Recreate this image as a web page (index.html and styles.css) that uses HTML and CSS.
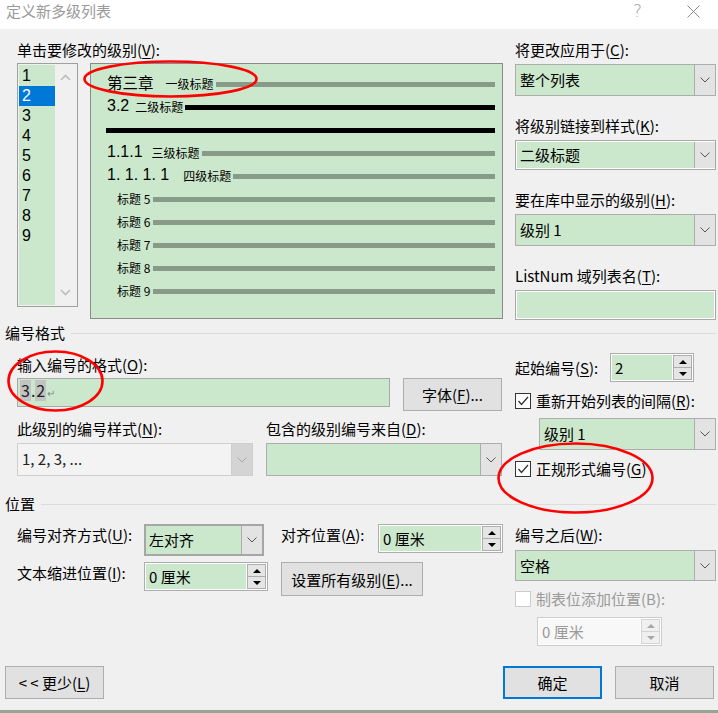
FILE: index.html
```html
<!DOCTYPE html>
<html lang="zh-CN">
<head>
  <meta charset="UTF-8" />
  <title>定义新多级列表</title>
  <link rel="stylesheet" href="styles.css">
</head>
<body>
  <!-- Title bar -->
  <div class="titlebar">
    <span class="title">定义新多级列表</span>
    <span class="help">?</span>
    <svg class="close" width="13" height="13" viewBox="0 0 13 13">
      <path d="M0.5 0.5 L12.5 12.5 M12.5 0.5 L0.5 12.5" stroke="#8a8a8a" stroke-width="1" fill="none"/>
    </svg>
  </div>

  <!-- Level picker + preview -->
  <div class="split top">
    <div class="left">
      <div class="lbl">单击要修改的级别(<u>V</u>):</div>
      <div class="levels">
        <div class="level-list">
          <ul class="items">
            <li>1</li>
            <li class="sel">2</li>
            <li>3</li>
            <li>4</li>
            <li>5</li>
            <li>6</li>
            <li>7</li>
            <li>8</li>
            <li>9</li>
          </ul>
          <div class="scroll">
            <svg width="11" height="7" viewBox="0 0 11 7"><path d="M1 6 L5.5 1.5 L10 6" stroke="#bdbdbd" stroke-width="1.6" fill="none"/></svg>
            <svg width="11" height="7" viewBox="0 0 11 7"><path d="M1 1 L5.5 5.5 L10 1" stroke="#bdbdbd" stroke-width="1.6" fill="none"/></svg>
          </div>
        </div>
        <div class="preview">
          <div class="pv-row">
            <span class="pv-num big">第三章</span>
            <span class="pv-name gap12">一级标题</span>
            <span class="pv-bar"></span>
          </div>
          <div class="pv-row">
            <span class="pv-num">3.2</span>
            <span class="pv-name gap6">二级标题</span>
            <span class="pv-bar dark"></span>
          </div>
          <div class="pv-row">
            <span class="pv-bar dark full"></span>
          </div>
          <div class="pv-row">
            <span class="pv-num">1.1.1</span>
            <span class="pv-name gap9">三级标题</span>
            <span class="pv-bar"></span>
          </div>
          <div class="pv-row">
            <span class="pv-num">1. 1. 1. 1</span>
            <span class="pv-name gap14">四级标题</span>
            <span class="pv-bar"></span>
          </div>
          <div class="pv-row"><span class="pv-small">标题 5</span><span class="pv-bar"></span></div>
          <div class="pv-row"><span class="pv-small">标题 6</span><span class="pv-bar"></span></div>
          <div class="pv-row"><span class="pv-small">标题 7</span><span class="pv-bar"></span></div>
          <div class="pv-row"><span class="pv-small">标题 8</span><span class="pv-bar"></span></div>
          <div class="pv-row"><span class="pv-small">标题 9</span><span class="pv-bar"></span></div>
        </div>
      </div>
    </div>

    <div class="right">
      <div class="field">
        <div class="lbl">将更改应用于(<u>C</u>):</div>
        <div class="combo">
          <span class="val">整个列表</span>
          <span class="drop"><svg width="10" height="6" viewBox="0 0 10 6"><path d="M0.5 0.5 L5 5 L9.5 0.5" stroke="#555" fill="none"/></svg></span>
        </div>
      </div>
      <div class="field">
        <div class="lbl">将级别链接到样式(<u>K</u>):</div>
        <div class="combo edit">
          <span class="val">二级标题</span>
          <span class="drop"><svg width="10" height="6" viewBox="0 0 10 6"><path d="M0.5 0.5 L5 5 L9.5 0.5" stroke="#555" fill="none"/></svg></span>
        </div>
      </div>
      <div class="field">
        <div class="lbl">要在库中显示的级别(<u>H</u>):</div>
        <div class="combo">
          <span class="val">级别 1</span>
          <span class="drop"><svg width="10" height="6" viewBox="0 0 10 6"><path d="M0.5 0.5 L5 5 L9.5 0.5" stroke="#555" fill="none"/></svg></span>
        </div>
      </div>
      <div class="field">
        <div class="lbl">ListNum 域列表名(<u>T</u>):</div>
        <div class="textbox framed"><span class="val"></span></div>
      </div>
    </div>
  </div>

  <!-- Number format -->
  <div class="sep"><span>编号格式</span></div>

  <div class="split format">
    <div class="left">
      <div class="lbl first">输入编号的格式(<u>O</u>):</div>
      <div class="format-row">
        <div class="textbox number-input">
          <span class="field-code">3</span>.<span class="field-code">2</span><span class="para">↵</span>
        </div>
        <button class="btn font-btn">字体(<u>F</u>)...</button>
      </div>
      <div class="pair">
        <div class="pair-item">
          <div class="lbl">此级别的编号样式(<u>N</u>):</div>
          <div class="combo disabled">
            <span class="val">1, 2, 3, ...</span>
            <span class="drop"><svg width="10" height="6" viewBox="0 0 10 6"><path d="M0.5 0.5 L5 5 L9.5 0.5" stroke="#a8a8a8" fill="none"/></svg></span>
          </div>
        </div>
        <div class="pair-item">
          <div class="lbl">包含的级别编号来自(<u>D</u>):</div>
          <div class="combo">
            <span class="val"></span>
            <span class="drop"><svg width="10" height="6" viewBox="0 0 10 6"><path d="M0.5 0.5 L5 5 L9.5 0.5" stroke="#555" fill="none"/></svg></span>
          </div>
        </div>
      </div>
    </div>

    <div class="right format-right">
      <div class="start-row">
        <span class="lbl start-lbl">起始编号(<u>S</u>):</span>
        <div class="spin start-spin">
          <span class="val">2</span>
          <span class="btns"><span><i class="up"></i></span><span><i class="down"></i></span></span>
        </div>
      </div>
      <div class="check-row">
        <span class="cb"><svg width="14" height="14" viewBox="0 0 14 14"><path d="M2.5 7 L5.5 10.5 L12 3" stroke="#333" stroke-width="1.3" fill="none"/></svg></span>
        <span class="lbl">重新开始列表的间隔(<u>R</u>):</span>
      </div>
      <div class="combo restart-combo">
        <span class="val">级别 1</span>
        <span class="drop"><svg width="10" height="6" viewBox="0 0 10 6"><path d="M0.5 0.5 L5 5 L9.5 0.5" stroke="#555" fill="none"/></svg></span>
      </div>
      <div class="check-row">
        <span class="cb"><svg width="14" height="14" viewBox="0 0 14 14"><path d="M2.5 7 L5.5 10.5 L12 3" stroke="#333" stroke-width="1.3" fill="none"/></svg></span>
        <span class="lbl">正规形式编号(<u>G</u>)</span>
      </div>
    </div>
  </div>

  <!-- Position -->
  <div class="sep"><span>位置</span></div>

  <div class="split position">
    <div class="left pos-grid">
      <div class="lbl">编号对齐方式(<u>U</u>):</div>
      <div class="combo focus align-combo">
        <span class="val">左对齐</span>
        <span class="drop"><svg width="10" height="6" viewBox="0 0 10 6"><path d="M0.5 0.5 L5 5 L9.5 0.5" stroke="#555" fill="none"/></svg></span>
      </div>
      <div class="lbl">对齐位置(<u>A</u>):</div>
      <div class="spin at-spin">
        <span class="val">0 厘米</span>
        <span class="btns"><span><i class="up"></i></span><span><i class="down"></i></span></span>
      </div>

      <div class="lbl">文本缩进位置(<u>I</u>):</div>
      <div class="spin indent-spin">
        <span class="val">0 厘米</span>
        <span class="btns"><span><i class="up"></i></span><span><i class="down"></i></span></span>
      </div>
      <button class="btn all-btn">设置所有级别(<u>E</u>)...</button>
    </div>

    <div class="right pos-right">
      <div class="lbl">编号之后(<u>W</u>):</div>
      <div class="combo after-combo">
        <span class="val">空格</span>
        <span class="drop"><svg width="10" height="6" viewBox="0 0 10 6"><path d="M0.5 0.5 L5 5 L9.5 0.5" stroke="#555" fill="none"/></svg></span>
      </div>
      <div class="check-row off">
        <span class="cb"></span>
        <span class="lbl">制表位添加位置(B):</span>
      </div>
      <div class="spin disabled tab-spin">
        <span class="val">0 厘米</span>
        <span class="btns"><span><i class="up"></i></span><span><i class="down"></i></span></span>
      </div>
    </div>
  </div>

  <!-- Buttons -->
  <div class="footer">
    <button class="btn">&lt; &lt; 更少(<u>L</u>)</button>
    <button class="btn default ok">确定</button>
    <button class="btn">取消</button>
  </div>
  <div class="edge"></div>

  <!-- hand drawn marks over the screenshot -->
  <svg class="marks" width="718" height="713" viewBox="0 0 718 713">
    <ellipse cx="170.5" cy="79" rx="86" ry="17.5" />
    <ellipse cx="55.5" cy="381" rx="47" ry="29.5" />
    <ellipse cx="575.5" cy="478" rx="77" ry="34.5" />
  </svg>
</body>
</html>
```

FILE: styles.css
```css
* {
  box-sizing: border-box;
}

body {
  margin: 0;
  width: 718px;
  height: 713px;
  overflow: hidden;
  position: relative;
  background: #f0f0f0;
  font-family: "Noto Sans CJK SC", "Noto Sans", sans-serif;
  font-size: 15px;
  color: #000;
}

u {
  text-decoration: underline;
  text-underline-offset: 2px;
}

.lbl {
  line-height: 20px;
  white-space: nowrap;
}

/* Title bar */
.titlebar {
  height: 29px;
  background: #fff;
  display: flex;
  align-items: flex-start;
  padding: 1px 0 0 6px;
  color: #9a9a9a;
  line-height: 20px;
}
.titlebar .help {
  margin-left: auto;
  font-family: "DejaVu Sans", sans-serif;
  font-size: 17px;
  font-weight: 300;
  color: #a0a0a0;
  margin-right: 45px;
}
.titlebar .close {
  margin-top: 4px;
  margin-right: 18px;
}

/* two column rows */
.split {
  display: flex;
  align-items: flex-start;
  padding: 0 2px 0 17px;
}
.split .left {
  width: 486px;
}
.split .right {
  width: 201px;
  margin-left: 12px;
}

.top {
  padding-top: 11px;
}

/* level list */
.levels {
  display: flex;
  margin-top: 3px;
}
.level-list {
  width: 61px;
  height: 244px;
  border: 1px solid #a0a0a0;
  background: #f0f0f0;
  display: flex;
  padding: 1px;
}
.items {
  list-style: none;
  margin: 0;
  padding: 1px 0 0;
  width: 36px;
  background: #cce8cc;
  font-family: "Liberation Sans", sans-serif;
  font-size: 16px;
}
.items li {
  height: 20px;
  line-height: 20px;
  padding-left: 3px;
}
.items li.sel {
  background: #0078d7;
  color: #fff;
}
.scroll {
  flex: 1;
  display: flex;
  flex-direction: column;
  align-items: center;
  justify-content: space-between;
  padding: 9px 0 9px;
}

/* preview */
.preview {
  margin-left: 12px;
  width: 413px;
  height: 256px;
  border: 1px solid #8a8a8a;
  background: #cce8cc;
  padding: 9px 7px 0 16px;
}
.pv-row {
  display: flex;
  align-items: center;
  height: 23px;
}
.pv-num {
  font-family: "Liberation Sans", sans-serif;
  font-size: 16px;
  line-height: 18px;
  margin-bottom: 3px;
  white-space: pre;
}
.pv-num.big {
  font-family: "Noto Sans CJK SC", sans-serif;
  font-size: 15.5px;
  margin-bottom: 5px;
}
.pv-name {
  font-size: 12px;
  line-height: 16px;
  margin-right: 2px;
  margin-bottom: 1px;
}
.gap14 { margin-left: 14px; }
.gap12 { margin-left: 12px; }
.gap9 { margin-left: 9px; }
.gap6 { margin-left: 6px; }
.pv-small {
  font-size: 12px;
  line-height: 16px;
  margin-left: 10px;
  margin-right: 3px;
  margin-bottom: 2px;
  white-space: pre;
}
.pv-bar {
  flex: 1;
  height: 5px;
  background: #889a88;
}
.pv-bar.dark {
  background: #000;
}
.pv-bar.full {
  margin-left: -1px;
}

/* right column fields */
.field + .field {
  margin-top: 20px;
}
.field .lbl + * {
  margin-top: 4px;
}

.combo {
  display: flex;
  height: 32px;
  border: 1px solid #adadad;
  background: #cce8cc;
}
.combo .val {
  flex: 1;
  padding-left: 4px;
  line-height: 30px;
  white-space: nowrap;
}
.combo .drop {
  width: 21px;
  background: #e3e3e3;
  border-left: 1px solid #adadad;
  display: flex;
  align-items: center;
  justify-content: center;
}
.combo.edit {
  height: 30px;
  border-color: #a8a8a8;
  padding: 1px 0 1px 1px;
  background: #fff;
}
.combo.edit .val {
  background: #cce8cc;
  line-height: 26px;
  padding-left: 3px;
}
.combo.disabled {
  background: #f3f3f3;
  border-color: #cfcfcf;
  color: #222;
}
.combo.disabled .drop {
  background: #d4d4d4;
  border-left-color: #cfcfcf;
}
.combo.focus {
  border: 2px solid #a6a6a6;
}
.combo.focus .val {
  line-height: 28px;
  padding-left: 3px;
}

.textbox {
  height: 30px;
  border: 1px solid #a8a8a8;
  background: #cce8cc;
}
.textbox.framed {
  padding: 1px;
  background: #fff;
}
.textbox.framed .val {
  display: block;
  height: 100%;
  background: #cce8cc;
}

/* separators */
.sep {
  display: flex;
  align-items: center;
  padding: 0 2px 0 5px;
  line-height: 20px;
}
.sep::after {
  content: "";
  flex: 1;
  border-top: 1px solid #dcdcdc;
  margin-left: 6px;
}
.top + .sep {
  margin-top: 3px;
}

/* number format */
.format .lbl.first {
  margin-top: 12px;
}
.format-row {
  display: flex;
  align-items: flex-start;
  margin-top: 3px;
}
.number-input {
  width: 373px;
  height: 29px;
  padding: 1px 0 0 2px;
  font-size: 16px;
  line-height: 21px;
  display: flex;
  align-items: flex-start;
  color: #222;
}
.field-code {
  background: #c3c3c3;
  padding: 0 1px;
}
.para {
  font-size: 10px;
  color: #888;
  line-height: 25px;
  margin-left: 1px;
}

.btn {
  font: inherit;
  color: #000;
  height: 33px;
  background: #e1e1e1;
  border: 1px solid #adadad;
  padding: 0;
  white-space: nowrap;
}
.font-btn {
  width: 99px;
  margin-left: 13px;
}

.pair {
  display: flex;
  gap: 13px;
  margin-top: 8px;
}
.pair-item {
  width: 236px;
}
.pair-item .combo {
  margin-top: 4px;
  height: 33px;
}

.format-right {
  padding-top: 10px;
}
.start-row {
  display: flex;
  align-items: center;
}
.start-lbl {
  width: 95px;
}
.start-spin {
  width: 84px;
}

.spin {
  display: flex;
  height: 29px;
  border: 1px solid #adadad;
  background: #fff;
  padding: 1px;
}
.spin .val {
  flex: 1;
  background: #cce8cc;
  line-height: 25px;
  padding-left: 3px;
  white-space: nowrap;
}
.spin .btns {
  width: 19px;
  margin-left: 1px;
  display: flex;
  flex-direction: column;
}
.spin .btns span {
  flex: 1;
  border: 1px solid #adadad;
  background: #e5e5e5;
  display: flex;
  align-items: center;
  justify-content: center;
}
.spin .btns span + span {
  border-top: none;
}
.up {
  border-left: 4px solid transparent;
  border-right: 4px solid transparent;
  border-bottom: 4px solid #000;
}
.down {
  border-left: 4px solid transparent;
  border-right: 4px solid transparent;
  border-top: 4px solid #000;
}
.spin.disabled {
  border-color: #cccccc;
  color: #9a9a9a;
}
.spin.disabled .val {
  background: #f8f8f8;
}
.spin.disabled .btns span {
  background: #f0f0f0;
  border-color: #d4d4d4;
}
.spin.disabled .up {
  border-bottom-color: #a8a8a8;
}
.spin.disabled .down {
  border-top-color: #a8a8a8;
}

.check-row {
  display: flex;
  align-items: center;
  height: 20px;
  margin-top: 9px;
}
.cb {
  width: 16px;
  height: 16px;
  border: 1px solid #333;
  background: #fff;
  display: flex;
  align-items: center;
  justify-content: center;
  margin-right: 5px;
}
.check-row.off .cb {
  border-color: #cccccc;
}
.check-row.off .lbl {
  color: #9a9a9a;
}
.restart-combo {
  margin: 7px 0 0 24px;
}

/* position */
.format + .sep {
  margin-top: 15px;
}
.pos-grid {
  display: grid;
  grid-template-columns: 127px 137px 97px 125px;
  row-gap: 6px;
  align-items: start;
  padding-top: 10px;
}
.pos-grid .lbl {
  margin-top: 1px;
}
.align-combo {
  width: 120px;
}
.at-spin {
  width: 125px;
}
.indent-spin {
  width: 124px;
}
.all-btn {
  grid-column: 3 / 5;
  width: 142px;
  height: 34px;
}
.pos-right {
  padding-top: 11px;
}
.after-combo {
  margin-top: 5px;
  height: 31px;
}
.after-combo .val {
  line-height: 29px;
}
.pos-right .check-row {
  margin-top: 8px;
}
.tab-spin {
  width: 125px;
  margin: 8px 0 0 22px;
}

/* footer */
.footer {
  display: flex;
  padding: 0 4px 0 5px;
  margin-top: 20px;
}
.footer .btn {
  width: 99px;
}
.footer .ok {
  margin-left: auto;
  margin-right: 13px;
}
.btn.default {
  border: 2px solid #0078d7;
}
.edge {
  margin-top: 11px;
  height: 3px;
  background: #93a593;
}

.marks {
  position: absolute;
  left: 0;
  top: 0;
  pointer-events: none;
}
.marks ellipse {
  fill: none;
  stroke: #ff0000;
  stroke-width: 2.6;
}
```
